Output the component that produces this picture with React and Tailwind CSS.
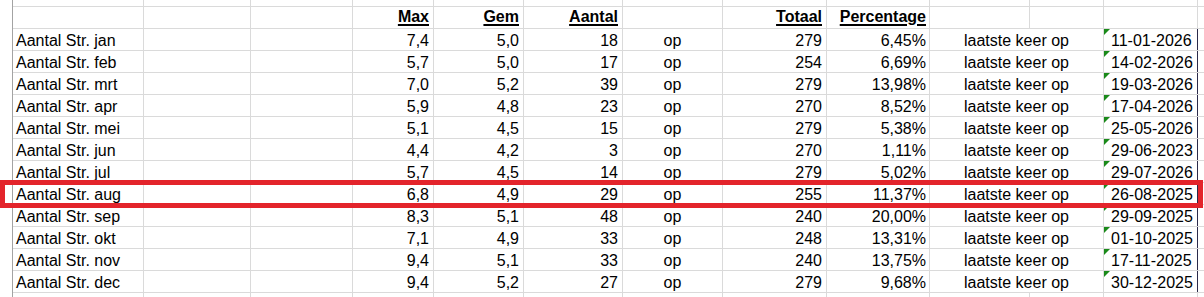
import clsx from 'clsx';

const rows = [
  ['jan', '7,4', '5,0', '18', '279', '6,45%', '11-01-2026'],
  ['feb', '5,7', '5,0', '17', '254', '6,69%', '14-02-2026'],
  ['mrt', '7,0', '5,2', '39', '279', '13,98%', '19-03-2026'],
  ['apr', '5,9', '4,8', '23', '270', '8,52%', '17-04-2026'],
  ['mei', '5,1', '4,5', '15', '279', '5,38%', '25-05-2026'],
  ['jun', '4,4', '4,2', '3', '270', '1,11%', '29-06-2023'],
  ['jul', '5,7', '4,5', '14', '279', '5,02%', '29-07-2026'],
  ['aug', '6,8', '4,9', '29', '255', '11,37%', '26-08-2025'],
  ['sep', '8,3', '5,1', '48', '240', '20,00%', '29-09-2025'],
  ['okt', '7,1', '4,9', '33', '248', '13,31%', '01-10-2025'],
  ['nov', '9,4', '5,1', '33', '240', '13,75%', '17-11-2025'],
  ['dec', '9,4', '5,2', '27', '279', '9,68%', '30-12-2025'],
];

// column widths incl. the 1px gridline on the right
const cols = [
  'w-[131px]',
  'w-[107px]',
  'w-[102px]',
  'w-[81px]',
  'w-[90px]',
  'w-[99px]',
  'w-[100px]',
  'w-[104px]',
  'w-[103px]',
  'w-[100px]',
  'w-[74px]',
  'w-[94px]',
];

function Cell({ w, className, children }) {
  return (
    <div
      className={clsx(
        'relative flex h-full shrink-0 items-end border-r border-[#dadada] leading-[18px] whitespace-nowrap',
        w,
        className
      )}
    >
      {children}
    </div>
  );
}

function EmptyRow({ className }) {
  return (
    <div className={clsx('flex', className)}>
      {cols.map((w, i) => (
        <Cell key={i} w={w} />
      ))}
    </div>
  );
}

function Head({ children }) {
  return (
    <span className="font-bold underline decoration-2 underline-offset-[2px]">
      {children}
    </span>
  );
}

export default function App() {
  return (
    <div className="relative flex h-[297px] w-[1204px] overflow-hidden bg-white font-['Liberation_Sans',Arial,sans-serif] text-[16px] text-black">
      <div className="w-[12px] shrink-0" />
      <div className="w-px shrink-0 bg-[#a3a3a3]" />
      <div className="flex flex-1 flex-col">
        <EmptyRow className="h-[7px] border-b border-[#dadada]" />

        <div className="flex h-[22px] border-b border-[#dadada]">
          <Cell w={cols[0]} />
          <Cell w={cols[1]} />
          <Cell w={cols[2]} />
          <Cell w={cols[3]} className="justify-end pr-[4px] pb-[2px]">
            <Head>Max</Head>
          </Cell>
          <Cell w={cols[4]} className="justify-end pr-[4px] pb-[2px]">
            <Head>Gem</Head>
          </Cell>
          <Cell w={cols[5]} className="justify-end pr-[4px] pb-[2px]">
            <Head>Aantal</Head>
          </Cell>
          <Cell w={cols[6]} />
          <Cell w={cols[7]} className="justify-end pr-[4px] pb-[2px]">
            <Head>Totaal</Head>
          </Cell>
          <Cell w={cols[8]} className="justify-end pr-[3px] pb-[2px]">
            <Head>Percentage</Head>
          </Cell>
          <Cell w={cols[9]} />
          <Cell w={cols[10]} />
          <Cell w={cols[11]} />
        </div>

        {rows.map((r) => (
          <div key={r[0]} className="flex h-[22px] border-b border-[#dadada]">
            <Cell w={cols[0]} className="pl-[3px]">
              Aantal Str. {r[0]}
            </Cell>
            <Cell w={cols[1]} />
            <Cell w={cols[2]} />
            <Cell w={cols[3]} className="justify-end pr-[4px]">
              {r[1]}
            </Cell>
            <Cell w={cols[4]} className="justify-end pr-[4px]">
              {r[2]}
            </Cell>
            <Cell w={cols[5]} className="justify-end pr-[4px]">
              {r[3]}
            </Cell>
            <Cell w={cols[6]} className="justify-center">
              op
            </Cell>
            <Cell w={cols[7]} className="justify-end pr-[4px]">
              {r[4]}
            </Cell>
            <Cell w={cols[8]} className="justify-end pr-[3px]">
              {r[5]}
            </Cell>
            <Cell w="w-[174px]" className="justify-center">
              laatste keer op
            </Cell>
            <Cell w={cols[11]} className="border-r-[#2a2a4a] pl-[7px]">
              <svg className="absolute top-0 left-0" width="6" height="6" viewBox="0 0 6 6">
                <polygon points="0,0 6,0 0,6" fill="#1a8a1a" />
              </svg>
              {r[6]}
            </Cell>
          </div>
        ))}

        <EmptyRow className="flex-1" />
      </div>

      {/* highlight round the aug row */}
      <div className="pointer-events-none absolute top-[180px] left-0 h-[28px] w-[1203px] border-[5px] border-[#e3242b]" />
    </div>
  );
}
